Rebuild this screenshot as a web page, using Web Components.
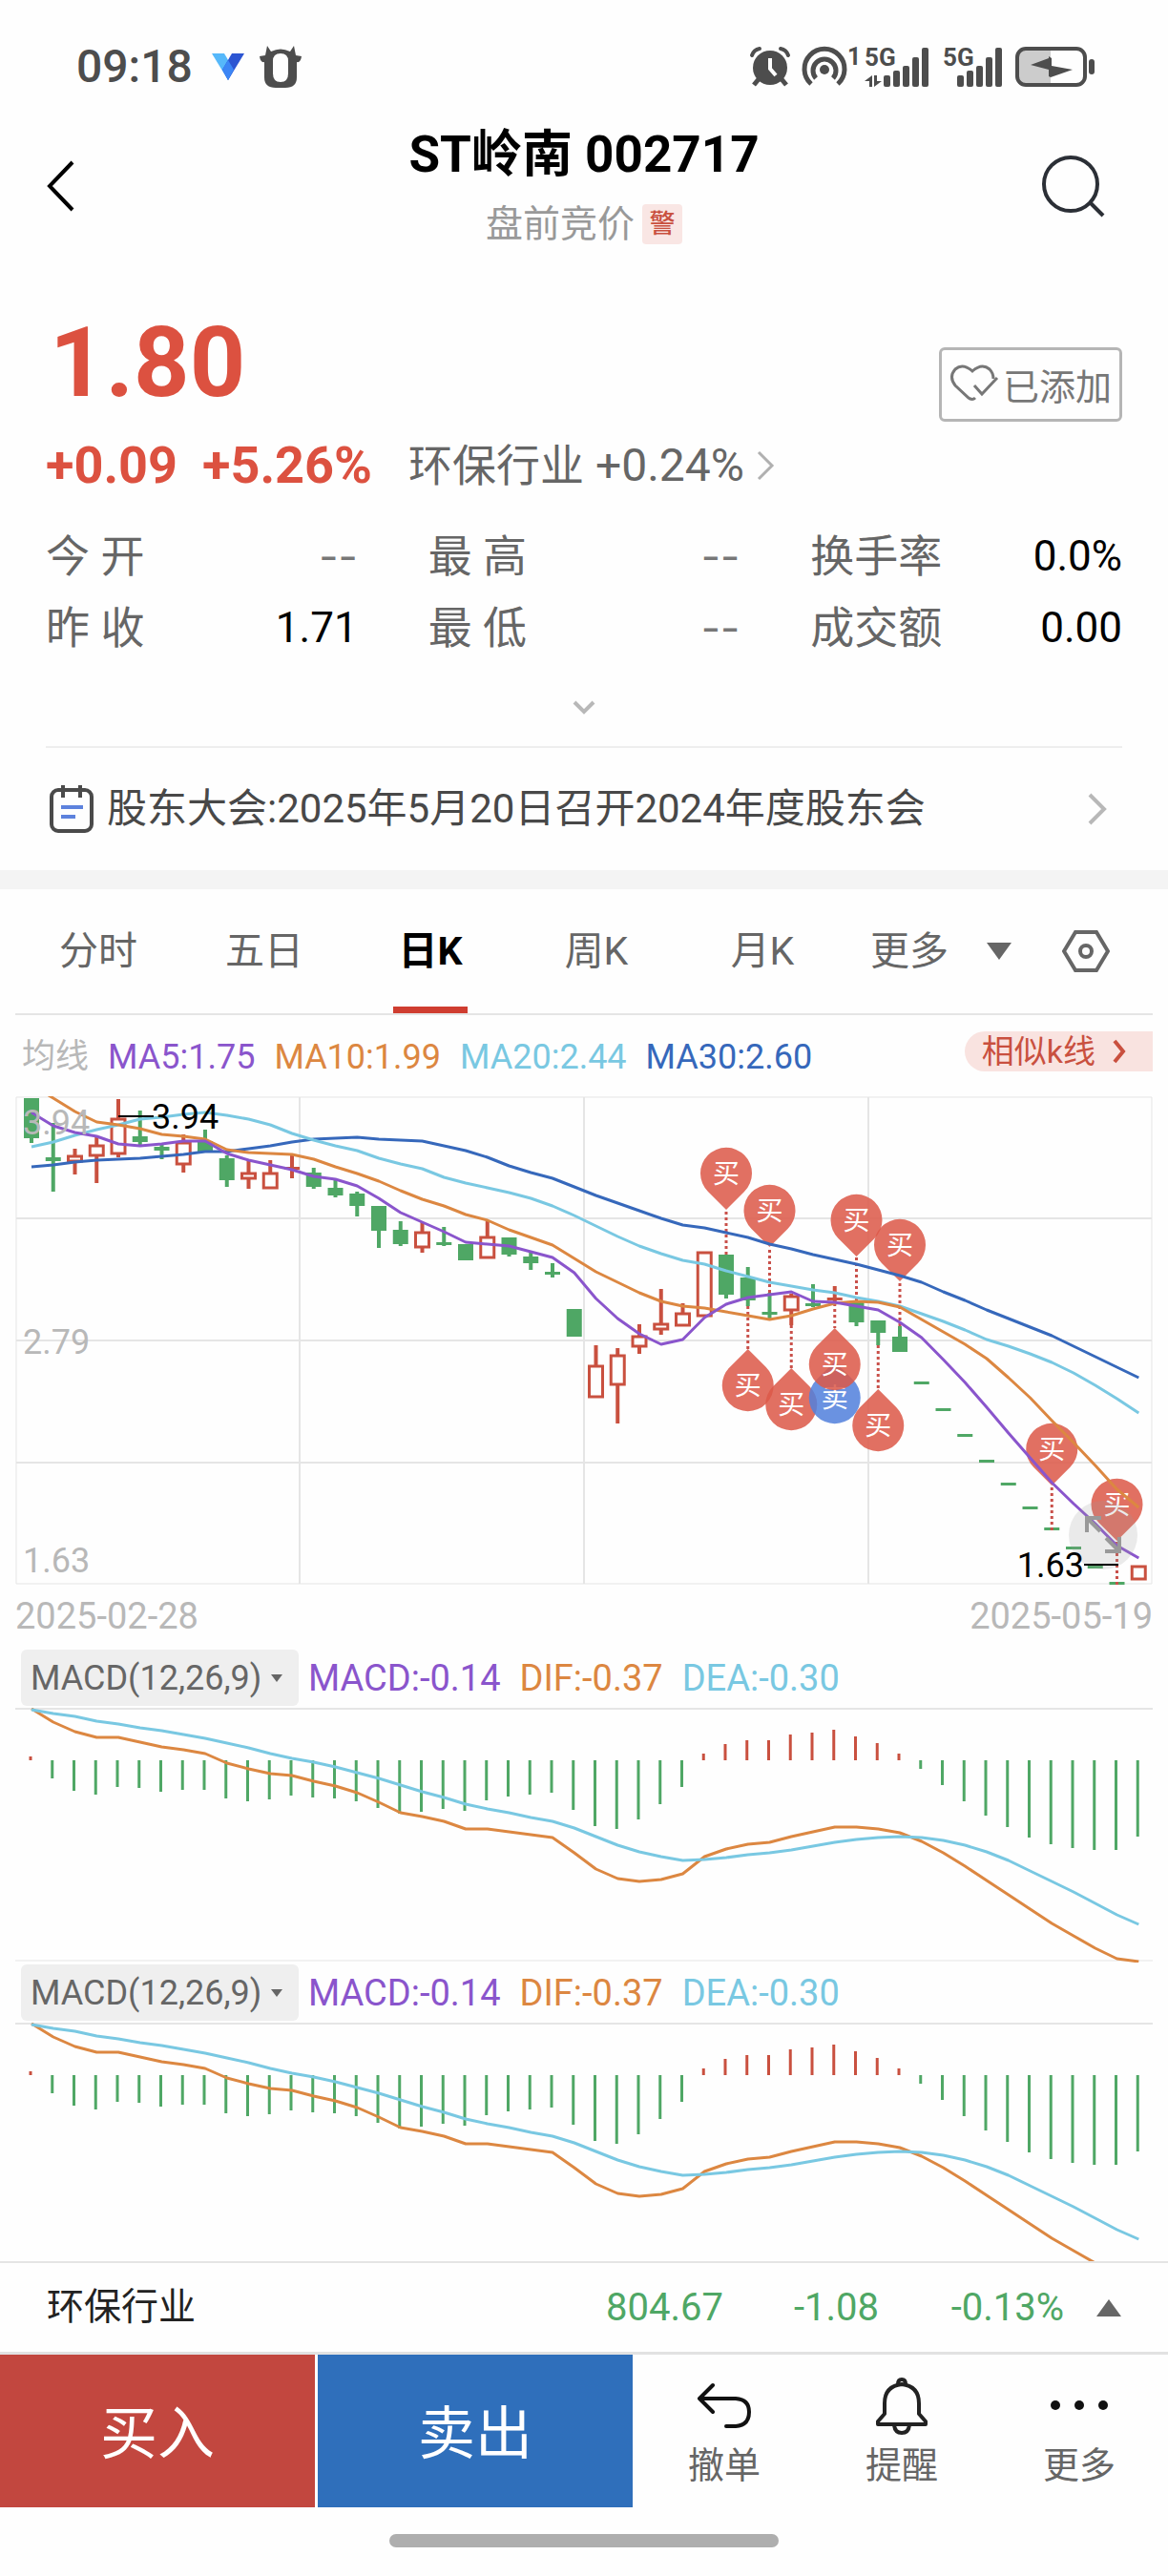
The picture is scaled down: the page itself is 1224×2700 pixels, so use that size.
<!DOCTYPE html>
<html lang="zh-CN">
<head>
<meta charset="UTF-8">
<meta name="viewport" content="width=device-width, initial-scale=1">
<title>ST岭南 002717</title>
<style>
  :root {
    --up: #dc5140;
    --up-dark: #c9503f;
    --down: #4fa765;
    --purple: #8a55cc;
    --orange: #dc8741;
    --cyan: #79c8e2;
    --blue: #3668bb;
    --text: #666;
    --muted: #b8b8b8;
    --line: #e5e5e5;
  }
  body {
    margin: 0;
    background: #fefefe;
    color: var(--text);
    font-family: Roboto, "Noto Sans CJK SC", sans-serif;
  }
</style>
</head>
<body>
<app-shell>
  <status-bar time="09:18"></status-bar>
  <stock-header name="ST岭南" code="002717" state="盘前竞价" flag="警"></stock-header>
  <quote-summary price="1.80" change="+0.09" percent="+5.26%" sector="环保行业" sector-percent="+0.24%">
    <stat-item label="今 开" value="--" empty></stat-item>
    <stat-item label="最 高" value="--" empty></stat-item>
    <stat-item label="换手率" value="0.0%"></stat-item>
    <stat-item label="昨 收" value="1.71"></stat-item>
    <stat-item label="最 低" value="--" empty></stat-item>
    <stat-item label="成交额" value="0.00"></stat-item>
  </quote-summary>
  <notice-row>股东大会:2025年5月20日召开2024年度股东会</notice-row>
  <period-tabs></period-tabs>
  <ma-legend></ma-legend>
  <k-chart from="2025-02-28" to="2025-05-19"></k-chart>
  <macd-panel></macd-panel>
  <macd-panel></macd-panel>
  <sector-bar slot="footer" name="环保行业" price="804.67" change="-1.08" percent="-0.13%"></sector-bar>
  <trade-bar slot="footer"></trade-bar>
</app-shell>

<script>
// shared rules for every shadow root
const BASE = `
  *, *::before, *::after { box-sizing: border-box; }
  :host { display: block; }
  button, select {
    margin: 0;
    padding: 0;
    border: 0;
    background: none;
    color: inherit;
    font: inherit;
    cursor: pointer;
  }
  a { color: inherit; text-decoration: none; }
  svg { display: block; flex: none; }
`;

class BaseElement extends HTMLElement {
  connectedCallback() {
    if (this.shadowRoot) return;
    const root = this.attachShadow({ mode: "open" });
    root.innerHTML = `<style>${BASE}${this.renderStyle()}</style>${this.render()}`;
  }

  attr(name) {
    return this.getAttribute(name) || "";
  }

  renderStyle() {
    return "";
  }

  render() {
    return "<slot></slot>";
  }
}

class AppShell extends BaseElement {
  renderStyle() {
    return `
      :host { display: flex; flex-direction: column; height: 100vh; }
      main { flex: 1; min-height: 0; overflow-y: auto; scrollbar-width: none; }
    `;
  }

  render() {
    return `<main><slot></slot></main><footer><slot name="footer"></slot></footer>`;
  }
}
customElements.define("app-shell", AppShell);

class StatusBar extends BaseElement {
  renderStyle() {
    return `
      :host { padding: 40px 76px 0 80px; color: #4d4d4d; }
      .bar { display: flex; align-items: center; justify-content: space-between; height: 60px; }
      .side { display: flex; align-items: center; }
      .left { gap: 16px; }
      .right { gap: 12px; }
      .time { font-size: 48px; font-weight: 500; line-height: 60px; margin-right: 4px; }
      svg { overflow: visible; }
      text { font-family: Roboto, sans-serif; font-weight: 700; fill: currentColor; }
    `;
  }

  renderBars(x) {
    return [12, 17, 22, 31, 41]
      .map((h, i) => `<rect x="${x + i * 10}" y="${42 - h}" width="7" height="${h}" rx="2" fill="currentColor"/>`)
      .join("");
  }

  render() {
    return `
      <div class="bar">
        <div class="side left">
          <span class="time">${this.attr("time")}</span>
          <svg width="34" height="30" viewBox="0 0 34 30">
            <path d="M0 1h13l10 17-6 11z" fill="#56b8fa"/>
            <path d="M21 1h13L17 29l-6-11z" fill="#2c55d2"/>
            <path d="M17 8l6 10-6 11-6-11z" fill="#3c86f5"/>
          </svg>
          <svg width="44" height="46" viewBox="0 0 44 46">
            <path fill="currentColor" fill-rule="evenodd" d="M8 1l4 6q10-5 20 0l4-6 2 10 6 1q-1 7-5 6v16q0 11-12 11H17Q5 45 5 34V18q-4 1-5-6l6-1zM22 9q-8 0-8 8v13q0 9 8 9t8-9V17q0-8-8-8z"/>
          </svg>
        </div>
        <div class="side right">
          <svg width="42" height="42" viewBox="0 0 42 42" fill="none" stroke="currentColor">
            <circle cx="21" cy="22" r="18" fill="currentColor" stroke="none"/>
            <path d="M2 9q2-6 8-7M40 9q-2-6-8-7" stroke-width="4" stroke-linecap="round"/>
            <path d="M9 34l-5 6M33 34l5 6" stroke-width="5"/>
            <path d="M21 12v11l6 7" stroke="#fefefe" stroke-width="4"/>
          </svg>
          <svg width="54" height="42" viewBox="0 0 54 42" fill="none" stroke="currentColor" stroke-width="5">
            <path d="M10 39a21 21 0 1 1 28 0"/>
            <path d="M15 33a12 12 0 1 1 18 0"/>
            <circle cx="24" cy="24" r="5" fill="currentColor" stroke="none"/>
            <text x="48" y="19" font-size="25" stroke="none">1</text>
          </svg>
          <svg width="70" height="42" viewBox="0 0 70 42">
            <text x="0" y="20" font-size="26">5G</text>
            <path fill="currentColor" d="M8 30v12H5v-6H0zM10 42V30h3v6h5z"/>
            ${this.renderBars(20)}
          </svg>
          <svg width="64" height="42" viewBox="0 0 64 42">
            <text x="0" y="20" font-size="26">5G</text>
            ${this.renderBars(15)}
          </svg>
          <svg width="84" height="42" viewBox="0 0 84 42">
            <path d="M10 2h27v38H10q-8 0-8-8V10q0-8 8-8z" fill="#ccc"/>
            <rect x="2" y="2" width="71" height="38" rx="9" fill="none" stroke="currentColor" stroke-width="4"/>
            <rect x="77" y="13" width="6" height="16" rx="3" fill="currentColor"/>
            <path d="M35 10l3 2v8l22 4-23 8-2-1v-7l-19-5 19-7z" fill="currentColor"/>
          </svg>
        </div>
      </div>
    `;
  }
}
customElements.define("status-bar", StatusBar);

class StockHeader extends BaseElement {
  renderStyle() {
    return `
      header {
        display: grid;
        grid-template-columns: 80px 1fr 80px;
        align-items: center;
        padding: 34px 48px 0;
      }
      .center { text-align: center; }
      h1 { margin: 0 0 24px; color: #000; font-size: 53px; font-weight: 700; line-height: 56px; }
      .state { display: flex; justify-content: center; gap: 8px; color: #999; font-size: 39px; line-height: 42px; }
      .flag { width: 42px; border-radius: 4px; background: #f9e6e4; color: var(--up-dark); font-size: 27px; font-weight: 500; }
      .search { justify-self: end; }
    `;
  }

  render() {
    return `
      <header>
        <button aria-label="返回">
          <svg width="32" height="54" viewBox="0 0 32 54"><path d="M28 2L4 27l24 25" fill="none" stroke="#000" stroke-width="4"/></svg>
        </button>
        <div class="center">
          <h1>${this.attr("name")} ${this.attr("code")}</h1>
          <div class="state">${this.attr("state")}<span class="flag">${this.attr("flag")}</span></div>
        </div>
        <button class="search" aria-label="搜索">
          <svg width="86" height="66" viewBox="0 0 86 66" fill="none" stroke="#2b2f36" stroke-width="4">
            <circle cx="32" cy="31" r="28"/><path d="M52 50l14 14"/>
          </svg>
        </button>
      </header>
    `;
  }
}
customElements.define("stock-header", StockHeader);

class StatItem extends BaseElement {
  renderStyle() {
    return `
      :host { display: flex; justify-content: space-between; font-size: 46px; line-height: 75px; }
      .value { color: #000; font-size: 44px; }
      :host([empty]) .value { color: #777; font-family: Inter, sans-serif; }
    `;
  }

  render() {
    return `<span>${this.attr("label")}</span><span class="value">${this.attr("value")}</span>`;
  }
}
customElements.define("stat-item", StatItem);

class QuoteSummary extends BaseElement {
  renderStyle() {
    return `
      :host { margin: 0 48px; padding-top: 74px; border-bottom: 2px solid #eee; }
      .top { display: flex; justify-content: space-between; align-items: flex-end; height: 100px; }
      .price { padding-left: 4px; color: var(--up); font-size: 102px; font-weight: 700; line-height: 100px; }
      .watch {
        display: flex;
        align-items: center;
        align-self: center;
        gap: 4px;
        height: 78px;
        margin-top: 46px;
        padding: 0 8px 2px;
        border: 3px solid #b5b5b5;
        border-radius: 6px;
        color: #777;
        font-size: 38px;
      }
      .change { display: flex; align-items: center; margin-top: 28px; line-height: 60px; }
      .up { color: var(--up); font-size: 54px; font-weight: 700; margin-right: 26px; }
      .sector { display: flex; align-items: center; gap: 12px; margin-left: 12px; font-size: 46px; }
      .percent { font-size: 48px; }
      .stats { display: grid; grid-template-columns: repeat(3, 1fr); column-gap: 74px; margin-top: 28px; }
      .more { display: block; margin: 38px auto 32px; }
    `;
  }

  render() {
    return `
      <div class="top">
        <span class="price">${this.attr("price")}</span>
        <button class="watch">
          <svg width="52" height="42" viewBox="0 0 52 42" fill="none" stroke="currentColor" stroke-width="3">
            <path d="M27 36q-3 3-7 0L6 23Q-1 14 6 6q8-7 18 2 10-9 18-2 4 4 4 10"/>
            <path d="M26 23l8 9 16-17"/>
          </svg>
          已添加
        </button>
      </div>
      <div class="change">
        <span class="up">${this.attr("change")}</span>
        <span class="up">${this.attr("percent")}</span>
        <a class="sector" href="#sector">
          <span>${this.attr("sector")}</span><span class="percent">${this.attr("sector-percent")}</span>
          <svg width="20" height="32" viewBox="0 0 20 32"><path d="M3 2l14 14L3 30" fill="none" stroke="#b0b0b0" stroke-width="3"/></svg>
        </a>
      </div>
      <div class="stats"><slot></slot></div>
      <button class="more" aria-label="展开">
        <svg width="24" height="16" viewBox="0 0 24 16"><path d="M2 2l10 10L22 2" fill="none" stroke="#b8b8b8" stroke-width="4"/></svg>
      </button>
    `;
  }
}
customElements.define("quote-summary", QuoteSummary);

class NoticeRow extends BaseElement {
  renderStyle() {
    return `
      :host { border-bottom: 20px solid #f4f4f4; }
      a {
        display: flex;
        align-items: center;
        gap: 14px;
        padding: 0 64px 0 52px;
        color: #484848;
        font-size: 42px;
        line-height: 128px;
        white-space: nowrap;
      }
      .text { flex: 1; }
    `;
  }

  render() {
    return `
      <a href="#notice">
        <svg width="46" height="50" viewBox="0 0 46 50" fill="none" stroke="#4a4a4a" stroke-width="4">
          <rect x="2" y="5" width="42" height="43" rx="7"/>
          <path d="M14 0v13M32 0v13"/>
          <path d="M12 23h23M12 33h15" stroke="#5d82dd"/>
        </svg>
        <span class="text"><slot></slot></span>
        <svg width="20" height="34" viewBox="0 0 20 34"><path d="M2 2l15 15L2 32" fill="none" stroke="#b8b8b8" stroke-width="4"/></svg>
      </a>
    `;
  }
}
customElements.define("notice-row", NoticeRow);

class PeriodTabs extends BaseElement {
  renderStyle() {
    return `
      nav {
        display: grid;
        grid-template-columns: repeat(6, 174fr) 148fr;
        margin: 0 16px;
        border-bottom: 2px solid var(--line);
      }
      button {
        display: flex;
        justify-content: center;
        align-items: center;
        gap: 40px;
        font-size: 41px;
        line-height: 130px;
        white-space: nowrap;
      }
      .active {
        color: #000;
        font-weight: 700;
        background: linear-gradient(#cf3d30, #cf3d30) center bottom / 78px 7px no-repeat;
      }
      .more { justify-content: flex-end; }
      .settings { padding-left: 8px; }
    `;
  }

  render() {
    const tabs = ["分时", "五日", "日K", "周K", "月K"];
    return `
      <nav>
        ${tabs.map((t) => `<button class="${t === "日K" ? "active" : ""}">${t}</button>`).join("")}
        <button class="more">更多
          <svg width="26" height="18" viewBox="0 0 26 18"><path d="M0 0h26L13 18z" fill="#666"/></svg>
        </button>
        <button class="settings" aria-label="设置">
          <svg width="50" height="44" viewBox="0 0 50 44" fill="none" stroke="#666" stroke-width="4">
            <path d="M14 2h22l12 20-12 20H14L2 22z"/><circle cx="25" cy="22" r="6"/>
          </svg>
        </button>
      </nav>
    `;
  }
}
customElements.define("period-tabs", PeriodTabs);

class MaLegend extends BaseElement {
  renderStyle() {
    return `
      :host { padding: 17px 16px 0 23px; }
      .row { display: flex; gap: 20px; height: 68px; font-size: 36px; line-height: 54px; white-space: nowrap; }
      .name { color: var(--muted); font-size: 35px; }
      .similar {
        display: flex;
        align-items: center;
        gap: 18px;
        height: 42px;
        margin-left: auto;
        padding: 0 28px 0 18px;
        border-radius: 21px 0 0 21px;
        background: #f9e3e0;
        color: var(--up-dark);
        font-size: 34px;
        line-height: 42px;
      }
    `;
  }

  render() {
    return `
      <div class="row">
        <span class="name">均线</span>
        <span style="color: var(--purple)">MA5:1.75</span>
        <span style="color: var(--orange)">MA10:1.99</span>
        <span style="color: var(--cyan)">MA20:2.44</span>
        <span style="color: var(--blue)">MA30:2.60</span>
        <button class="similar">相似k线
          <svg width="14" height="26" viewBox="0 0 14 26"><path d="M2 2l9 11-9 11" fill="none" stroke="currentColor" stroke-width="4"/></svg>
        </button>
      </div>
    `;
  }
}
customElements.define("ma-legend", MaLegend);

// x of the n-th trading day, shared by all plots
const dayX = (i) => 17 + i * 22.75;
const polyline = (values, color) =>
  `<polyline points="${values.map((y, i) => `${dayX(i).toFixed(1)},${y}`).join(" ")}" fill="none" stroke="var(--${color})" stroke-width="3" stroke-linejoin="round"/>`;

// [direction, high, body top, body bottom, low]
const CANDLES = [
  ["d", 2, 2, 44, 49], ["d", 28, 64, 68, 100], ["u", 55, 62, 69, 82], ["u", 42, 51, 63, 91],
  ["u", 3, 23, 61, 64], ["d", 15, 42, 48, 51], ["d", 49, 53, 57, 66], ["u", 40, 48, 72, 80],
  ["d", 35, 47, 58, 58], ["d", 62, 65, 88, 95], ["u", 68, 80, 87, 97], ["u", 67, 80, 97, 97],
  ["u", 62, 74, 77, 86], ["d", 75, 80, 95, 97], ["d", 88, 96, 104, 106], ["d", 100, 102, 115, 126],
  ["d", 115, 115, 141, 159], ["d", 131, 140, 155, 157], ["u", 132, 142, 159, 164], ["d", 137, 153, 156, 157],
  ["d", 155, 155, 172, 172], ["u", 131, 147, 170, 170], ["d", 148, 148, 166, 168], ["d", 163, 168, 175, 182],
  ["d", 175, 184, 187, 190], ["d", 223, 223, 252, 252], ["u", 261, 282, 316, 316], ["u", 264, 271, 303, 343],
  ["u", 239, 251, 263, 270], ["u", 202, 238, 245, 250], ["u", 217, 227, 241, 241], ["u", 163, 163, 231, 231],
  ["d", 166, 166, 208, 212], ["d", 179, 190, 214, 220], ["d", 206, 226, 229, 233], ["u", 207, 209, 225, 240],
  ["d", 197, 217, 220, 221], ["u", 199, 211, 214, 217], ["d", 214, 216, 237, 241], ["d", 235, 235, 248, 261],
  ["d", 241, 252, 268, 268], ["d", 299, 299, 302, 302], ["d", 327, 327, 330, 330], ["d", 354, 354, 357, 357],
  ["d", 381, 381, 384, 384], ["d", 405, 405, 408, 408], ["d", 430, 430, 433, 433], ["d", 452, 452, 455, 455],
  ["d", 472, 472, 475, 475], ["d", 492, 492, 495, 495], ["d", 509, 509, 512, 512], ["u", 492, 492, 507, 507],
];

const MA5 = [17, 31, 38, 42, 50, 52, 50, 47, 47, 60, 67, 72, 77, 84, 87, 94, 107, 122, 132, 142, 153, 155, 157, 163, 169, 185, 212, 233, 249, 260, 255, 232, 218, 211, 208, 205, 215, 216, 220, 224, 237, 253, 276, 300, 326, 353, 379, 405, 427, 448, 471, 484];
const MA10 = [-12, 2, 16, 27, 30, 34, 40, 42, 45, 56, 59, 60, 61, 66, 74, 81, 89, 99, 108, 115, 124, 130, 140, 148, 156, 170, 184, 195, 206, 215, 220, 222, 226, 230, 234, 230, 223, 217, 215, 216, 221, 234, 247, 260, 275, 295, 316, 340, 363, 387, 412, 431];
const MA20 = [53, 48, 41, 35, 30, 24, 22, 19, 17, 20, 24, 30, 39, 46, 52, 57, 65, 71, 76, 85, 91, 96, 101, 107, 115, 125, 136, 147, 157, 165, 172, 176, 183, 189, 195, 199, 203, 206, 211, 215, 220, 228, 236, 245, 255, 262, 270, 279, 290, 303, 317, 332];
const MA30 = [74, 72, 69, 67, 66, 65, 63, 61, 58, 58, 55, 52, 48, 45, 44, 43, 45, 46, 47, 52, 57, 64, 73, 80, 86, 95, 104, 112, 120, 128, 135, 138, 143, 148, 155, 160, 166, 171, 176, 182, 188, 195, 205, 214, 224, 233, 242, 251, 262, 273, 284, 295];

// [day, y of the candle end, y of the tip, text]
const PINS = [
  [32, 166, 119, "买"], [34, 206, 158, "买"], [38, 214, 168, "买"], [40, 241, 194, "买"],
  [47, 455, 408, "买"], [50, 512, 466, "买"], [33, 220, 265, "买"], [35, 240, 285, "买"],
  [37, 217, 278, "卖"], [37, 217, 243, "买"], [39, 261, 307, "买"],
];

class KChart extends BaseElement {
  renderStyle() {
    return `
      :host { margin: 0 16px; }
      svg { width: 100%; height: auto; }
      text { font-family: Roboto, "Noto Sans CJK SC", sans-serif; }
      .dates { display: flex; justify-content: space-between; color: var(--muted); font-size: 38px; line-height: 66px; }
    `;
  }

  renderCandle([dir, high, top, bottom, low], i) {
    const x = dayX(i);
    const h = bottom - top;
    if (dir === "d") {
      return `<path d="M${x} ${high}V${low}" stroke="var(--down)" stroke-width="4"/>
        <rect x="${x - 8}" y="${top}" width="16" height="${h}" fill="var(--down)"/>`;
    }
    const body = h > 4
      ? `<rect x="${x - 7}" y="${top + 1}" width="14" height="${h - 2}" fill="#fefefe" stroke="var(--up-dark)" stroke-width="3"/>`
      : `<rect x="${x - 8}" y="${top}" width="16" height="${h}" fill="var(--up-dark)"/>`;
    return `<path d="M${x} ${high}V${low}" stroke="var(--up-dark)" stroke-width="4"/>${body}`;
  }

  renderPin([day, from, tip, text]) {
    const x = dayX(day);
    const s = tip > from ? 1 : -1;
    // pins above the candle point down, pins below it point up
    const up = s > 0;
    const fill = text === "卖" ? "#5280dc" : "#dc5848";
    const stem = text === "卖" ? "" : `<path d="M${x} ${from}V${tip}" stroke="#c9504a" stroke-width="3" stroke-dasharray="3 3"/>`;
    return `${stem}
      <g transform="translate(${x} ${tip})">
        <path d="M0 0L-19 ${19 * s}A27 27 0 1 ${up ? 0 : 1} 19 ${19 * s}Z" fill="${fill}" fill-opacity=".86"/>
        <text y="${38 * s + 10}" text-anchor="middle" font-size="28" fill="#fff">${text}</text>
      </g>`;
  }

  render() {
    return `
      <svg viewBox="0 0 1192 512" role="img" aria-label="日K">
        <path d="M1 1H1191V511H1Z" fill="none" stroke="var(--line)"/>
        <path d="M1 128H1191M1 256H1191M1 384H1191M298 1V511M596 1V511M894 1V511" stroke="var(--line)" stroke-width="2"/>
        ${CANDLES.map((c, i) => this.renderCandle(c, i)).join("")}
        ${PINS.map((p) => this.renderPin(p)).join("")}
        ${polyline(MA30, "blue")}
        ${polyline(MA20, "cyan")}
        ${polyline(MA10, "orange")}
        ${polyline(MA5, "purple")}
        <g font-size="36" fill="var(--muted)">
          <text x="8" y="40">3.94</text>
          <text x="8" y="270">2.79</text>
          <text x="8" y="499">1.63</text>
        </g>
        <circle cx="1140" cy="460" r="36" fill="#999" fill-opacity=".2"/>
        <path d="M1123 457V442H1138M1123 442l14 14M1157 462V477H1142M1157 477l-14-14" fill="none" stroke="#999" stroke-width="4"/>
        <path d="M108 21H145M1120 491H1156" stroke="#000" stroke-width="2"/>
        <g font-size="36" fill="#000">
          <text x="143" y="34">3.94</text>
          <text x="1120" y="504" text-anchor="end">1.63</text>
        </g>
      </svg>
      <div class="dates"><span>${this.attr("from")}</span><span>${this.attr("to")}</span></div>
    `;
  }
}
customElements.define("k-chart", KChart);

const BARS = [51, 74, 87, 91, 83, 84, 88, 86, 86, 95, 98, 96, 92, 94, 95, 98, 105, 111, 109, 106, 108, 97, 93, 91, 89, 107, 124, 127, 117, 101, 83, 48, 38, 34, 34, 28, 26, 23, 30, 37, 48, 64, 81, 98, 113, 125, 136, 143, 147, 149, 149, 135];
const DIF = [1, 15, 25, 31, 31, 36, 41, 44, 48, 58, 64, 69, 71, 77, 82, 89, 99, 110, 114, 119, 127, 127, 130, 133, 136, 152, 169, 179, 182, 180, 174, 156, 148, 143, 141, 135, 130, 125, 125, 127, 131, 140, 152, 166, 181, 196, 211, 226, 239, 252, 263, 266];
const DEA = [2, 6, 9, 14, 17, 21, 24, 28, 32, 37, 42, 48, 53, 57, 62, 68, 74, 81, 88, 94, 101, 106, 110, 115, 119, 126, 135, 144, 151, 156, 160, 159, 157, 154, 152, 149, 145, 141, 138, 136, 135, 136, 139, 144, 151, 160, 171, 182, 193, 205, 217, 227];

class MacdPanel extends BaseElement {
  renderStyle() {
    return `
      :host { margin: 0 16px; }
      .head { display: flex; align-items: center; gap: 20px; height: 63px; padding-left: 6px; font-size: 38px; white-space: nowrap; }
      .picker { display: grid; align-items: center; margin-right: -10px; }
      .picker > * { grid-area: 1 / 1; }
      .picker svg { justify-self: end; margin-right: 17px; pointer-events: none; }
      select {
        appearance: none;
        height: 59px;
        padding: 0 38px 0 10px;
        border-radius: 6px;
        background: #efefef;
        color: #666;
        font-size: 36px;
      }
      .plot { width: 100%; height: auto; }
    `;
  }

  renderBar(y, i) {
    const x = dayX(i) - 1;
    return `<path d="M${x} 55V${y}" stroke="var(--${y < 55 ? "up-dark" : "down"})" stroke-width="3"/>`;
  }

  render() {
    return `
      <div class="head">
        <label class="picker">
          <select aria-label="指标"><option>MACD(12,26,9)</option></select>
          <svg width="12" height="8" viewBox="0 0 12 8"><path d="M0 0h12L6 8z" fill="#666"/></svg>
        </label>
        <span style="color: var(--purple)">MACD:-0.14</span>
        <span style="color: var(--orange)">DIF:-0.37</span>
        <span style="color: var(--cyan)">DEA:-0.30</span>
      </div>
      <svg class="plot" viewBox="0 0 1192 267" role="img" aria-label="MACD">
        <path d="M0 1H1192" stroke="var(--line)" stroke-width="2"/>
        <path d="M0 265H1192" stroke="var(--line)"/>
        ${BARS.map((y, i) => this.renderBar(y, i)).join("")}
        ${polyline(DIF, "orange")}
        ${polyline(DEA, "cyan")}
      </svg>
    `;
  }
}
customElements.define("macd-panel", MacdPanel);

class SectorBar extends BaseElement {
  renderStyle() {
    return `
      :host { border-top: 2px solid var(--line); border-bottom: 3px solid #e2e2e2; }
      a {
        display: grid;
        grid-template-columns: 1fr auto 163px 194px 60px;
        align-items: center;
        padding: 0 49px;
        color: var(--down);
        font-size: 40px;
        line-height: 93px;
        text-align: right;
      }
      .name { color: #222; font-size: 39px; text-align: left; }
      svg { justify-self: end; }
    `;
  }

  render() {
    return `
      <a href="#sector">
        <span class="name">${this.attr("name")}</span>
        <span>${this.attr("price")}</span>
        <span>${this.attr("change")}</span>
        <span>${this.attr("percent")}</span>
        <svg width="26" height="18" viewBox="0 0 26 18"><path d="M0 18h26L13 0z" fill="#666"/></svg>
      </a>
    `;
  }
}
customElements.define("sector-bar", SectorBar);

class TradeBar extends BaseElement {
  renderStyle() {
    return `
      .bar { display: grid; grid-template-columns: 330fr 330fr 558fr; column-gap: 3px; height: 160px; }
      .buy, .sell { padding-bottom: 6px; color: #fff; font-size: 60px; }
      .buy { background: #c2473f; }
      .sell { background: #2f6fbb; }
      .tools { display: grid; grid-template-columns: repeat(3, 1fr); }
      .tools button {
        display: flex;
        flex-direction: column;
        align-items: center;
        gap: 10px;
        padding-top: 24px;
        font-size: 38px;
        line-height: 44px;
      }
      .home { padding: 28px 0 30px; }
      .home::before {
        content: "";
        display: block;
        width: 33.4%;
        height: 14px;
        margin: 0 auto;
        border-radius: 7px;
        background: #aeaeae;
      }
    `;
  }

  render() {
    return `
      <div class="bar">
        <button class="buy">买入</button>
        <button class="sell">卖出</button>
        <div class="tools">
          <button>
            <svg width="60" height="60" viewBox="0 0 60 60" fill="none" stroke="#111" stroke-width="4" stroke-linecap="round" stroke-linejoin="round">
              <path d="M18 8L4 22l14 14M4 22h38q14 1 14 14 0 14-14 15H32"/>
            </svg>
            撤单
          </button>
          <button>
            <svg width="60" height="60" viewBox="0 0 60 60" fill="none" stroke="#222" stroke-width="4" stroke-linejoin="round">
              <path d="M26 7q0-5 4-5t4 5"/>
              <path d="M30 7q18 2 18 20v11l7 8v3H5v-3l7-8V27Q12 9 30 7z"/>
              <path d="M22 50q1 8 8 8t8-8"/>
            </svg>
            提醒
          </button>
          <button>
            <svg width="60" height="60" viewBox="0 0 60 60" fill="#111">
              <circle cx="5" cy="29" r="5"/><circle cx="30" cy="29" r="5"/><circle cx="55" cy="29" r="5"/>
            </svg>
            更多
          </button>
        </div>
      </div>
      <div class="home"></div>
    `;
  }
}
customElements.define("trade-bar", TradeBar);
</script>
</body>
</html>
